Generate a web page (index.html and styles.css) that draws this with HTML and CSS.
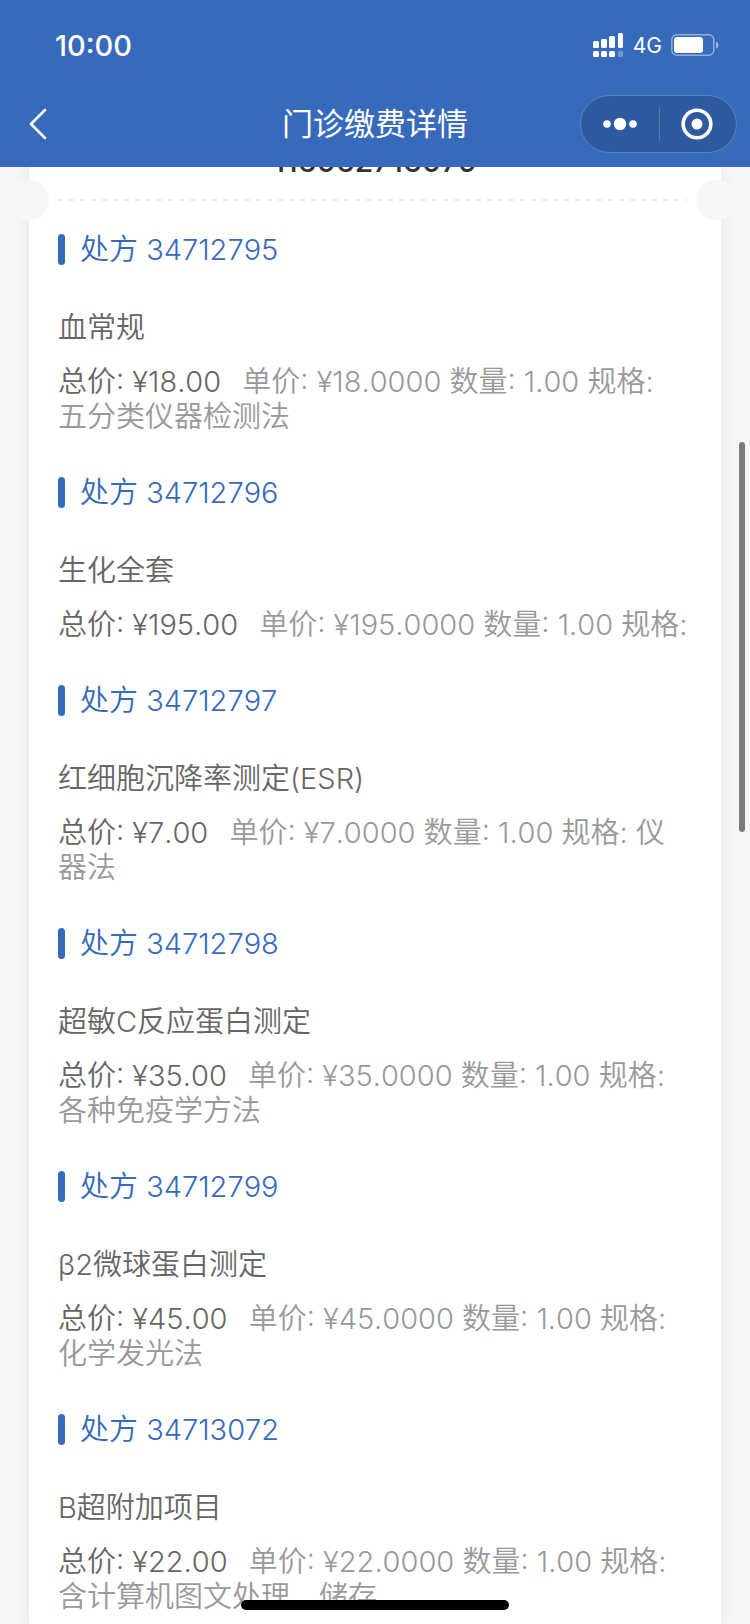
FILE: index.html
```html
<!DOCTYPE html>
<html lang="zh-CN">
<head>
  <meta charset="UTF-8">
  <meta name="viewport" content="width=device-width, initial-scale=1">
  <title>门诊缴费详情</title>
  <link rel="stylesheet" href="styles.css">
</head>
<body>

  <header class="header">
    <div class="status-bar">
      <span class="time">10:00</span>
      <div class="status-icons">
        <svg width="31" height="25" viewBox="0 0 31 25" fill="#fff">
          <rect x="0" y="8" width="6" height="7" rx="1.5"/>
          <rect x="8" y="6" width="6" height="9" rx="1.5"/>
          <rect x="16" y="3" width="6" height="12" rx="1.5"/>
          <rect x="25" y="0" width="5" height="15" rx="1.5"/>
          <rect x="0" y="18" width="6" height="6" rx="1.5"/>
          <rect x="8" y="18" width="6" height="6" rx="1.5"/>
          <rect x="16" y="18" width="6" height="6" rx="1.5"/>
          <rect x="25" y="18" width="5" height="6" rx="1.5" opacity="0.3"/>
        </svg>
        <span class="network">4G</span>
        <svg width="48" height="22" viewBox="0 0 48 22">
          <rect x="0.8" y="0.8" width="42" height="20.4" rx="5" fill="none" stroke="#fff" stroke-opacity="0.45" stroke-width="1.5"/>
          <rect x="3" y="3" width="29" height="16" rx="3" fill="#fff"/>
          <path d="M45 7.5c3.4 1.2 3.4 5.8 0 7z" fill="#fff" fill-opacity="0.5"/>
        </svg>
      </div>
    </div>

    <nav class="nav-bar">
      <button class="back-button" type="button" aria-label="返回">
        <svg width="18" height="32" viewBox="0 0 18 32" fill="none" stroke="#fff" stroke-width="2.6" stroke-linecap="round" stroke-linejoin="round">
          <path d="M16 2L2 16l14 14"/>
        </svg>
      </button>
      <h1 class="nav-title">门诊缴费详情</h1>
      <div class="capsule">
        <button type="button" aria-label="更多">
          <svg width="36" height="14" viewBox="0 0 36 14" fill="#fff">
            <circle cx="5" cy="7" r="3.8"/>
            <circle cx="18" cy="7" r="6.2"/>
            <circle cx="31" cy="7" r="3.8"/>
          </svg>
        </button>
        <button type="button" aria-label="关闭">
          <svg width="32" height="32" viewBox="0 0 32 32">
            <circle cx="16" cy="16" r="13.8" fill="none" stroke="#fff" stroke-width="3.6"/>
            <circle cx="16" cy="16" r="5.5" fill="#fff"/>
          </svg>
        </button>
      </div>
    </nav>
  </header>

  <main class="content">
    <div class="card">
      <div class="card-head">
        <p class="bill-no">116062716079</p>
      </div>

      <div class="divider"></div>

      <section class="recipe">
        <h2>处方 34712795</h2>
        <h3>血常规</h3>
        <p><span class="total">总价: ¥18.00</span> 单价: ¥18.0000 数量: 1.00 规格: 五分类仪器检测法</p>
      </section>

      <section class="recipe">
        <h2>处方 34712796</h2>
        <h3>生化全套</h3>
        <p><span class="total">总价: ¥195.00</span> 单价: ¥195.0000 数量: 1.00 规格:</p>
      </section>

      <section class="recipe">
        <h2>处方 34712797</h2>
        <h3>红细胞沉降率测定(ESR)</h3>
        <p><span class="total">总价: ¥7.00</span> 单价: ¥7.0000 数量: 1.00 规格: 仪器法</p>
      </section>

      <section class="recipe">
        <h2>处方 34712798</h2>
        <h3>超敏C反应蛋白测定</h3>
        <p><span class="total">总价: ¥35.00</span> 单价: ¥35.0000 数量: 1.00 规格: 各种免疫学方法</p>
      </section>

      <section class="recipe">
        <h2>处方 34712799</h2>
        <h3>β2微球蛋白测定</h3>
        <p><span class="total">总价: ¥45.00</span> 单价: ¥45.0000 数量: 1.00 规格: 化学发光法</p>
      </section>

      <section class="recipe">
        <h2>处方 34713072</h2>
        <h3>B超附加项目</h3>
        <p><span class="total">总价: ¥22.00</span> 单价: ¥22.0000 数量: 1.00 规格: 含计算机图文处理、储存</p>
      </section>
    </div>
  </main>

  <div class="scroll-thumb"></div>
  <div class="home-indicator"></div>

</body>
</html>
```

FILE: styles.css
```css
* {
  box-sizing: border-box;
}

body {
  position: relative;
  display: flex;
  flex-direction: column;
  height: 100vh;
  margin: 0;
  overflow: hidden;
  background-color: #f7f7f7;
  font-family: Inter, "Noto Sans CJK SC", sans-serif;
  font-size: 29px;
  font-weight: 350;
  font-kerning: none;
  line-height: 35px;
}

h1,
h2,
h3,
p {
  margin: 0;
  font-size: inherit;
  font-weight: inherit;
}

button {
  display: flex;
  align-items: center;
  justify-content: center;
  padding: 0;
  border: none;
  background: none;
  cursor: pointer;
}

svg {
  display: block;
}

/* Header */
.header {
  flex: none;
  background-color: #386abb;
  color: #fff;
}

.status-bar {
  display: flex;
  align-items: center;
  justify-content: space-between;
  height: 90px;
  padding: 0 31px 0 55px;
}

.time {
  font-size: 29px;
  font-weight: 500;
}

.status-icons {
  display: flex;
  align-items: center;
  gap: 9px;
}

.network {
  font-size: 21px;
  font-weight: 400;
}

.nav-bar {
  display: grid;
  grid-template-columns: 1fr auto 1fr;
  align-items: center;
  height: 77px;
  padding: 0 13px 10px;
}

.back-button {
  justify-self: start;
  padding: 0 16px;
}

.nav-title {
  font-size: 31px;
  font-weight: 400;
}

.capsule {
  display: flex;
  justify-self: end;
  width: 157px;
  height: 58px;
  border: 1px solid #5a82c0;
  border-radius: 29px;
  background-color: #305a9f;
}

.capsule button {
  position: relative;
  flex: 1;
}

.capsule button + button::before {
  content: "";
  position: absolute;
  left: 0;
  width: 1px;
  height: 34px;
  background-color: #5379b4;
}

/* Bill card */
.content {
  flex: 1;
  min-height: 0;
  overflow: hidden;
  padding: 0 29px;
}

.card {
  background-color: #fff;
  box-shadow: 0 0 20px rgba(0, 0, 0, 0.08);
}

/* scrolled mostly out of view under the header */
.card-head {
  display: flex;
  flex-direction: column;
  justify-content: flex-end;
  height: 12px;
}

.bill-no {
  color: #333;
  font-size: 30px;
  font-weight: 500;
  text-align: center;
}

.divider {
  position: relative;
  height: 2px;
  margin: 20px 34px 0 29px;
  background: repeating-linear-gradient(to right, #ebebeb 0 5px, transparent 5px 11px);
}

.divider::before,
.divider::after {
  content: "";
  position: absolute;
  top: -19px;
  width: 40px;
  height: 40px;
  border-radius: 50%;
  background-color: #f7f7f7;
}

.divider::before {
  left: -49px;
}

.divider::after {
  right: -49px;
}

.recipe {
  padding: 31px 32px 10px 29px;
  color: #999;
}

.recipe h2 {
  display: flex;
  align-items: center;
  color: #386abb;
}

.recipe h2::before {
  content: "";
  width: 7px;
  height: 31px;
  margin-right: 15px;
  border-radius: 4px;
  background-color: #386abb;
}

.recipe h3 {
  margin: 43px 0 19px;
  color: #666;
}

.total {
  margin-right: 13px;
  color: #666;
}

/* System overlays */
.scroll-thumb {
  position: absolute;
  top: 442px;
  right: 5px;
  width: 6px;
  height: 390px;
  border-radius: 3px;
  background-color: #7b7b7b;
}

.home-indicator {
  position: absolute;
  bottom: 14px;
  left: 50%;
  width: 268px;
  height: 10px;
  margin-left: -134px;
  border-radius: 5px;
  background-color: #000;
}
```
